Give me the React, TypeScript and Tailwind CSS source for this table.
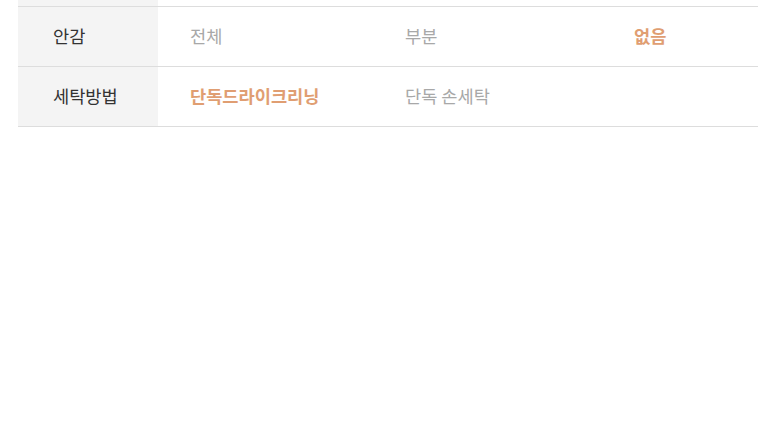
import React from "react";

const font = { fontFamily: '"Noto Sans CJK KR", "Noto Sans", sans-serif' };

type Cell = { text: string; on?: boolean };
const rows: { label: string; cells: Cell[] }[] = [
  { label: "안감", cells: [{ text: "전체" }, { text: "부분" }, { text: "없음", on: true }] },
  { label: "세탁방법", cells: [{ text: "단독드라이크리닝", on: true }, { text: "단독 손세탁" }, { text: "" }] },
];

const widths = ["w-[215px]", "w-[229px]", "w-[156px]"];

export default function App() {
  return (
    <div className="w-[780px] h-[443px] bg-white" style={font}>
      <div className="ml-[18px] w-[740px] -mt-[53px]">
        <div className="flex h-[60px] border-b border-[#dddddd]">
          <div className="w-[140px] bg-[#f4f4f4]" />
        </div>
        {rows.map((r) => (
          <div key={r.label} className="flex h-[60px] border-b border-[#dddddd] items-stretch">
            <div className="w-[140px] bg-[#f4f4f4] flex items-center pl-[35px] text-[17.6px] text-[#333333]">
              {r.label}
            </div>
            {r.cells.map((c, i) => (
              <div
                key={i}
                className={`${widths[i]} flex items-center pl-[32px] text-[17.6px] ${
                  c.on ? "text-[#e09e72] font-bold" : "text-[#a8a8a8]"
                }`}
              >
                {c.text}
              </div>
            ))}
          </div>
        ))}
      </div>
    </div>
  );
}
